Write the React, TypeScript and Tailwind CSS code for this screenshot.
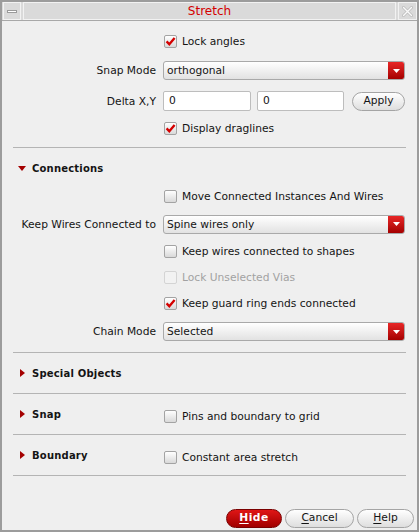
import React from 'react';

type CheckProps = { checked?: boolean; disabled?: boolean };

const Check: React.FC<CheckProps> = ({ checked, disabled }) => (
  <span
    className={`flex h-[13px] w-[13px] shrink-0 items-center justify-center rounded-[2px] border ${
      disabled
        ? 'border-[#d4d4d4] bg-[#f2f2f2]'
        : 'border-[#a3a3a3] bg-gradient-to-b from-white to-[#d9d9d9]'
    }`}
  >
    {checked && (
      <svg width="11" height="11" viewBox="0 0 11 11">
        <path d="M1.6 5.4 L4.3 8.3 L9.6 1.9" fill="none" stroke="#d40000" strokeWidth="2.3" />
      </svg>
    )}
  </span>
);

const CheckItem: React.FC<CheckProps & { label: string }> = ({ label, checked, disabled }) => (
  <div className="flex items-center gap-[5px] pl-px">
    <Check checked={checked} disabled={disabled} />
    <span className={disabled ? 'text-[#a2a2a2]' : 'text-[#141414]'}>{label}</span>
  </div>
);

const Select: React.FC<{ value: string }> = ({ value }) => (
  <div className="flex h-[19px] w-[242px] items-stretch rounded-[3px] border border-[#a9a9a9] bg-gradient-to-b from-white to-[#e2e2e2]">
    <span className="flex-1 pl-[3px] leading-[18px] text-[#141414]">{value}</span>
    <span className="flex w-[16px] items-center justify-center rounded-r-[2px] bg-gradient-to-b from-[#e82626] to-[#a50000]">
      <svg width="7" height="4" viewBox="0 0 7 4">
        <path d="M0 0 H7 L3.5 4 Z" fill="#ffffff" />
      </svg>
    </span>
  </div>
);

const Field: React.FC<{ value: string; w: string }> = ({ value, w }) => (
  <div className={`${w} h-[20px] rounded-[2px] border border-[#bdbdbd] bg-white pl-[5px] leading-[18px] text-[#141414]`}>
    {value}
  </div>
);

const Row: React.FC<{ h: string; label?: string; children?: React.ReactNode }> = ({ h, label, children }) => (
  <div className={`flex ${h} items-center`}>
    <div className="w-[144px] shrink-0 pr-[1px] pt-[2px] text-right text-[#141414]">{label}</div>
    <div className="ml-[6px] flex items-center">{children}</div>
  </div>
);

const Rule = () => <div className="h-px bg-[#b4b4b4]" />;

const Arrow: React.FC<{ open?: boolean }> = ({ open }) => (
  <span className="flex w-[14px] items-center">
    {open ? (
      <svg width="8" height="5" viewBox="0 0 8 5">
        <path d="M0 0 H8 L4 5 Z" fill="#a40000" />
      </svg>
    ) : (
      <svg width="8" height="8" viewBox="0 0 8 8">
        <path d="M2 0 L7 4 L2 8 Z" fill="#a40000" />
      </svg>
    )}
  </span>
);

const Section: React.FC<{ title: string; children?: React.ReactNode }> = ({ title, children }) => (
  <div className="flex h-[40px] items-center">
    <div className="flex w-[150px] shrink-0 items-center pl-[5px]">
      <Arrow />
      <span className="text-[10px] font-bold tracking-[0.2px] text-[#141414]">{title}</span>
    </div>
    {children && <div className="pt-[6px]">{children}</div>}
  </div>
);

const Pill: React.FC<{ first: string; rest: string; w: string; primary?: boolean }> = ({ first, rest, w, primary }) => (
  <div
    className={`${w} flex h-[19px] items-center justify-center rounded-full border ${
      primary
        ? 'border-[#7a0000] bg-gradient-to-b from-[#e01616] to-[#a10000] font-bold tracking-[0.5px] text-white'
        : 'border-[#a4a4a4] bg-gradient-to-b from-white to-[#dedede] text-[#141414]'
    }`}
  >
    <span>
      <span className="underline underline-offset-[2px]">{first}</span>
      {rest}
    </span>
  </div>
);

export default function App() {
  return (
    <div className="flex h-[532px] w-[419px] flex-col border-2 border-[#9c9c9c] bg-[#efefef] font-['DejaVu_Sans',sans-serif] text-[10.7px]">
      {/* title bar */}
      <div className="flex h-[19px] shrink-0 gap-[2px] border-b border-[#a8a8a8] bg-[#dadada] pl-px">
        <div className="flex w-[18px] items-center justify-center border border-[#f2f2f2]">
          <span className="h-[3px] w-[10px] border border-[#9a9a9a] bg-white" />
        </div>
        <div className="flex flex-1 items-center justify-center border border-[#f2f2f2] text-[12px] text-[#d40000]">
          Stretch
        </div>
        <div className="flex w-[19px] items-center justify-center border border-[#f2f2f2]">
          <svg width="11" height="11" viewBox="0 0 11 11">
            <path d="M1.5 1.5 L9.5 9.5 M9.5 1.5 L1.5 9.5" stroke="#bdbdbd" strokeWidth="3" strokeLinecap="round" />
            <path d="M1.5 1.5 L9.5 9.5 M9.5 1.5 L1.5 9.5" stroke="#fafafa" strokeWidth="1.4" strokeLinecap="round" />
          </svg>
        </div>
      </div>

      {/* body */}
      <div className="flex flex-1 flex-col pl-[11px] pr-[3px]">
        <div className="flex flex-col pr-[8px] pt-[8px]">
          <Row h="h-[26px]">
            <CheckItem label="Lock angles" checked />
          </Row>
          <Row h="h-[31px]" label="Snap Mode">
            <Select value="orthogonal" />
          </Row>
          <Row h="h-[30px]" label="Delta X,Y">
            <div className="flex items-center">
              <Field value="0" w="w-[88px]" />
              <div className="w-[6px]" />
              <Field value="0" w="w-[87px]" />
              <div className="w-[8px]" />
              <div className="flex h-[19px] w-[53px] items-center justify-center rounded-full border border-[#a4a4a4] bg-gradient-to-b from-white to-[#dedede] text-[#141414]">
                Apply
              </div>
            </div>
          </Row>
          <Row h="h-[26px]">
            <CheckItem label="Display draglines" checked />
          </Row>
          <div className="h-[5px]" />
          <Rule />

          <div className="flex h-[40px] items-center pl-[5px] pt-px">
            <Arrow open />
            <span className="text-[10px] font-bold tracking-[0.2px] text-[#141414]">Connections</span>
          </div>
          <Row h="h-[18px]">
            <CheckItem label="Move Connected Instances And Wires" />
          </Row>
          <Row h="h-[36px]" label="Keep Wires Connected to">
            <Select value="Spine wires only" />
          </Row>
          <Row h="h-[20px]">
            <CheckItem label="Keep wires connected to shapes" />
          </Row>
          <Row h="h-[32px]">
            <CheckItem label="Lock Unselected Vias" disabled />
          </Row>
          <Row h="h-[20px]">
            <CheckItem label="Keep guard ring ends connected" checked />
          </Row>
          <Row h="h-[35px]" label="Chain Mode">
            <Select value="Selected" />
          </Row>
          <div className="h-[3px]" />
          <Rule />
          <Section title="Special Objects" />
          <Rule />
          <Section title="Snap">
            <CheckItem label="Pins and boundary to grid" />
          </Section>
          <Rule />
          <Section title="Boundary">
            <CheckItem label="Constant area stretch" />
          </Section>
          <Rule />
        </div>

        <div className="mt-auto flex justify-end gap-[3px] pb-[2px]">
          <Pill first="H" rest="ide" w="w-[56px]" primary />
          <Pill first="C" rest="ancel" w="w-[69px]" />
          <Pill first="H" rest="elp" w="w-[57px]" />
        </div>
      </div>
    </div>
  );
}
